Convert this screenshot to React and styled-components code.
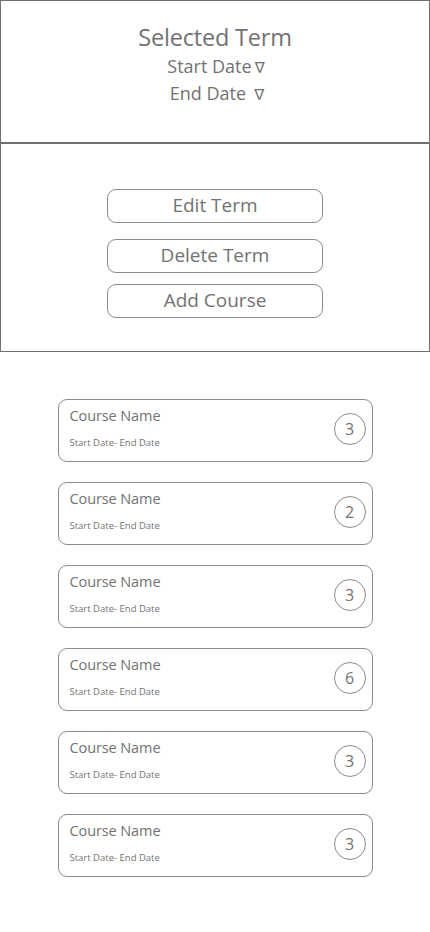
import styled, { createGlobalStyle } from "styled-components";

const GlobalStyle = createGlobalStyle`
  body {
    margin: 0;
    background: #ffffff;
    font-family: "Open Sans", "Noto Sans", sans-serif;
    color: #727272;
  }
`;

const Page = styled.div`
  width: 430px;
  display: flex;
  flex-direction: column;
`;

const TermHeader = styled.header`
  height: 143px;
  box-sizing: border-box;
  border: 1px solid #707070;
  display: flex;
  flex-direction: column;
  align-items: center;
  padding-top: 20px;
`;

const Title = styled.h1`
  margin: 0;
  font-size: 23.5px;
  font-weight: 400;
  line-height: 32px;
  letter-spacing: -0.2px;
`;

const DateLine = styled.div`
  height: 27px;
  font-size: 18px;
  line-height: 27px;
  display: flex;
  align-items: center;
  padding-left: ${(p) => p.$shift || 0}px;
`;

const Caret = styled.span`
  font-family: "Noto Sans", "DejaVu Sans", sans-serif;
  font-size: 15px;
  line-height: 1;
  margin-left: ${(p) => p.$gap}px;
  margin-top: 2px;
`;

const ActionsPanel = styled.section`
  height: 209px;
  box-sizing: border-box;
  border: 1px solid #707070;
  display: flex;
  flex-direction: column;
  align-items: center;
  padding-top: 45px;
`;

const ActionButton = styled.button`
  width: 216px;
  height: 34px;
  margin-top: ${(p) => p.$gap || 0}px;
  box-sizing: border-box;
  border: 1px solid #8c8c8c;
  border-radius: 9px;
  background: #ffffff;
  color: #727272;
  font-family: inherit;
  font-size: 19px;
  line-height: 1;
  padding: 0 0 2px;
`;

const CourseList = styled.ul`
  list-style: none;
  margin: 47px 0 0;
  padding: 0;
  display: flex;
  flex-direction: column;
  align-items: center;
  gap: 20px;
`;

const CourseCard = styled.li`
  width: 315px;
  height: 63px;
  box-sizing: border-box;
  border: 1px solid #8c8c8c;
  border-radius: 9px;
  display: flex;
  align-items: center;
  justify-content: space-between;
  padding: 0 6px 0 11px;
`;

const CourseText = styled.div`
  display: flex;
  flex-direction: column;
  align-self: flex-start;
  padding-top: 4px;
`;

const CourseName = styled.span`
  font-size: 14.5px;
  line-height: 24px;
  letter-spacing: -0.1px;
`;

const CourseDates = styled.span`
  font-size: 9.5px;
  line-height: 14px;
  margin-top: 8px;
`;

const CountBadge = styled.span`
  width: 32px;
  height: 32px;
  box-sizing: border-box;
  border: 1px solid #8c8c8c;
  border-radius: 50%;
  display: flex;
  align-items: center;
  justify-content: center;
  font-size: 16px;
  margin-top: -3px;
`;

const courses = [3, 2, 3, 6, 3, 3];

export default function App() {
  return (
    <Page>
      <GlobalStyle />
      <TermHeader>
        <Title>Selected Term</Title>
        <DateLine $shift={2}>
          Start Date<Caret $gap={3}>∇</Caret>
        </DateLine>
        <DateLine $shift={4}>
          End Date<Caret $gap={8}>∇</Caret>
        </DateLine>
      </TermHeader>
      <ActionsPanel>
        <ActionButton>Edit Term</ActionButton>
        <ActionButton $gap={16}>Delete Term</ActionButton>
        <ActionButton $gap={11}>Add Course</ActionButton>
      </ActionsPanel>
      <CourseList>
        {courses.map((count, i) => (
          <CourseCard key={i}>
            <CourseText>
              <CourseName>Course Name</CourseName>
              <CourseDates>Start Date- End Date</CourseDates>
            </CourseText>
            <CountBadge>{count}</CountBadge>
          </CourseCard>
        ))}
      </CourseList>
    </Page>
  );
}
